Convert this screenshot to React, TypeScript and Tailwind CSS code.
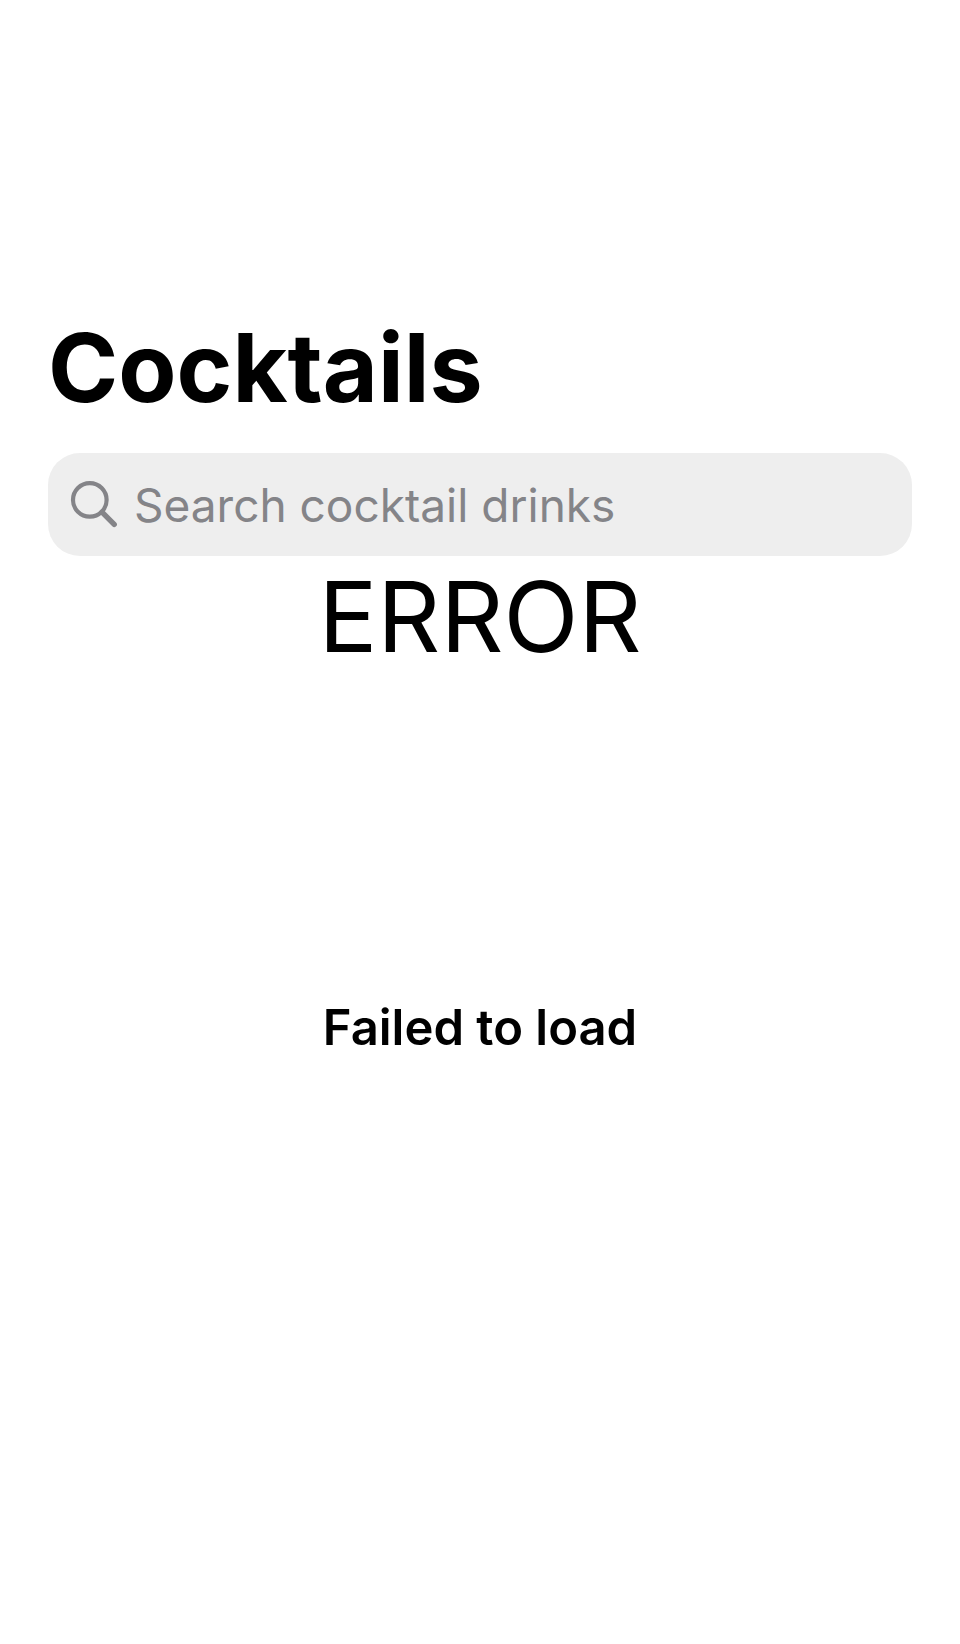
export default function App() {
  return (
    <main className="min-h-screen bg-white px-12 pt-[312px] font-['Inter',sans-serif] text-black">
      <h1 className="text-[95px] leading-[112px] font-bold">Cocktails</h1>
      <label className="mt-[29px] flex h-[103px] items-center gap-4 rounded-[32px] bg-[#eeeeee] px-[22px] text-[#848488]">
        <svg viewBox="0 0 48 48" className="size-12 shrink-0" fill="none" stroke="currentColor" strokeLinecap="round" aria-hidden="true">
          <circle cx="19.8" cy="18.9" r="16.8" strokeWidth="4.2" />
          <path d="M32 31.2 L44.2 43.4" strokeWidth="5.4" />
        </svg>
        <input
          type="search"
          aria-label="Search cocktail drinks"
          placeholder="Search cocktail drinks"
          className="w-full min-w-0 bg-transparent text-[46px] leading-[60px] outline-none placeholder:text-[#848488]"
        />
      </label>
      <section className="text-center">
        <h2 className="text-[98px] leading-[122px]">ERROR</h2>
        <p className="mt-[320px] text-[49px] leading-[60px] font-semibold">Failed to load</p>
      </section>
    </main>
  );
}
